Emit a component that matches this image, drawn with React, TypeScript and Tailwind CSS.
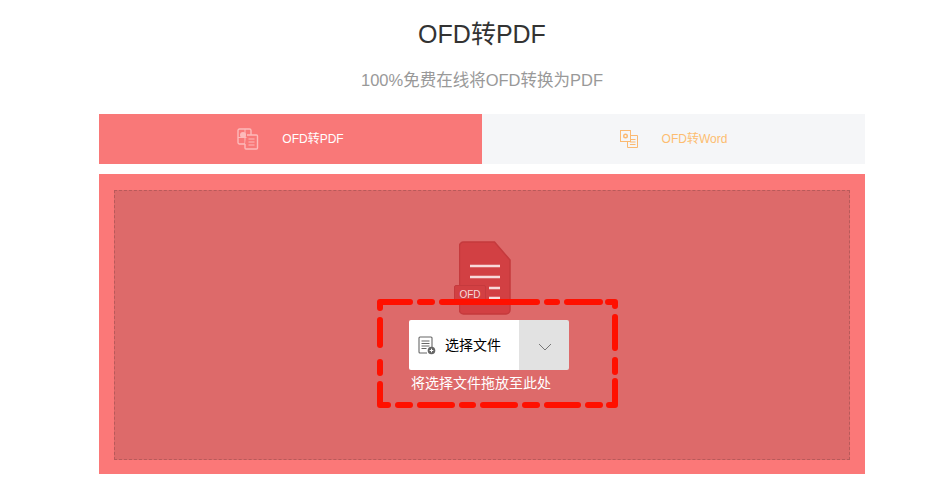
const fontStack = { fontFamily: '"Liberation Sans", "Noto Sans CJK SC", sans-serif' };

function PdfTabIcon() {
  return (
    <svg width="22" height="22" viewBox="0 0 22 22" fill="none" stroke="#fdbaba" strokeWidth="1.4">
      <rect x="1" y="1" width="13" height="15" rx="1.5" />
      <path d="M1 9.500h13M8 1v15" strokeWidth="1" />
      <circle cx="6" cy="7" r="3" fill="#fdbaba" stroke="none" />
      <path d="M10 7h9.500a1 1 0 0 1 1 1v12a1 1 0 0 1-1 1H9a1 1 0 0 1-1-1v-4" fill="#f97878" />
      <path d="M11.500 11h6M11.500 14h6M11.500 17h6" strokeWidth="1" />
    </svg>
  );
}

function WordTabIcon() {
  return (
    <svg width="18" height="18" viewBox="0 0 18 18" fill="none" stroke="#fbb971" strokeWidth="1">
      <rect x="0.500" y="0.500" width="10" height="11" />
      <circle cx="5.500" cy="6" r="1.800" stroke="#fbb971" strokeWidth="1.400" />
      <path d="M10.500 5.500h7v12h-10v-6" />
      <path d="M10 9.500h5.500M10 12h5.500M10 14.500h5.500" />
    </svg>
  );
}

function FileIcon() {
  return (
    <svg width="52" height="74" viewBox="0 0 52 74" fill="none">
      <path
        d="M4.500 1h31l15.500 18v50a4 4 0 0 1-4 4H4.500a4 4 0 0 1-4-4V5a4 4 0 0 1 4-4z"
        fill="#d24043"
        stroke="#c53a3d"
        strokeWidth="1.500"
      />
      <path d="M11 25h30M11 36h30" stroke="#f8dada" strokeWidth="2.500" />
      <path d="M30 47h11M30 57h11" stroke="#f8dada" strokeWidth="2.500" />
    </svg>
  );
}

function SelectIcon() {
  return (
    <svg width="18" height="19" viewBox="0 0 18 19" fill="none" stroke="#666" strokeWidth="1.100">
      <path d="M14 11V2a1 1 0 0 0-1-1H2a1 1 0 0 0-1 1v14a1 1 0 0 0 1 1h7" />
      <path d="M3.500 5h8M3.500 7.500h8M3.500 10h8M3.500 12.500h5" />
      <circle cx="13.500" cy="14.500" r="3.800" fill="#666" stroke="none" />
      <path d="M11.700 14.500h3.600M13.500 12.700v3.600" stroke="#fff" strokeWidth="1" />
    </svg>
  );
}

// hand drawn annotation around the button
function DashedMark() {
  const lines = [
    "M380 308V302H410", "M420 302H432", "M442 302H537", "M547 302H557", "M567 302H600", "M608 302H615V306",
    "M615 317V348", "M615 360V372", "M615 381V405H609", "M600 405H588", "M578 405H547", "M537 405H525",
    "M515 405H483", "M473 405H462", "M452 405H420", "M410 405H398", "M388 405H380V384", "M380 373V362", "M380 345V320",
  ];
  return (
    <svg className="absolute left-0 top-0 pointer-events-none" width="952" height="487" fill="none">
      {lines.map((d) => (
        <path key={d} d={d} stroke="#ff1000" strokeWidth="6" strokeLinecap="round" strokeLinejoin="round" />
      ))}
    </svg>
  );
}

export default function App() {
  return (
    <div className="relative h-[487px] w-[952px] overflow-hidden bg-white" style={fontStack}>
      <div className="ml-[99px] flex w-[766px] flex-col items-stretch">
        <h1 className="mt-[19px] h-[30px] text-center text-[25px] leading-[30px] font-normal text-[#333]">OFD转PDF</h1>
        <p className="mt-[19px] h-[24px] text-center text-[16.500px] leading-[24px] text-[#999]">100%免费在线将OFD转换为PDF</p>
        <div className="mt-[22px] flex h-[50px]">
          <div className="flex flex-1 items-center justify-center gap-[23px] bg-[#f97878] text-xs text-white">
            <PdfTabIcon />
            <span>OFD转PDF</span>
          </div>
          <div className="flex flex-1 items-center justify-center gap-6 bg-[#f5f6f8] text-xs text-[#fdbd70]">
            <WordTabIcon />
            <span>OFD转Word</span>
          </div>
        </div>
        <div className="mt-[10px] h-[300px] bg-[#fb7878] px-[15px] pt-[16px]">
          <div className="flex h-[270px] flex-col items-center border border-dashed border-[#b85a5a] bg-[#dd6a6a] pt-[50px] pl-[14px]">
            <div className="relative mr-[8px] h-[75px] w-[52px]">
              <FileIcon />
              <span className="absolute left-[-5px] top-[44px] flex h-[18px] w-[32px] items-center justify-center rounded-[2px] border border-[#c53a3d] bg-[#d24043] text-[10px] text-[#f8dada]">
                OFD
              </span>
            </div>
            <div className="mt-[4px] flex h-[50px] w-[160px] overflow-hidden rounded-[2px]">
              <div className="flex w-[110px] items-center gap-[9px] bg-white pl-[9px] text-[14px] text-black">
                <SelectIcon />
                <span>选择文件</span>
              </div>
              <div className="flex w-[50px] items-center justify-center bg-[#e2e2e2] pt-[3px] pl-[2px]">
                <svg width="14" height="8" viewBox="0 0 14 8" fill="none" stroke="#777" strokeWidth="1">
                  <path d="M1 1l6 6 6-6" />
                </svg>
              </div>
            </div>
            <p className="mt-[4px] w-[160px] pl-[2px] text-[14px] leading-[18px] whitespace-nowrap text-white">
              将选择文件拖放至此处
            </p>
          </div>
        </div>
      </div>
      <DashedMark />
    </div>
  );
}
